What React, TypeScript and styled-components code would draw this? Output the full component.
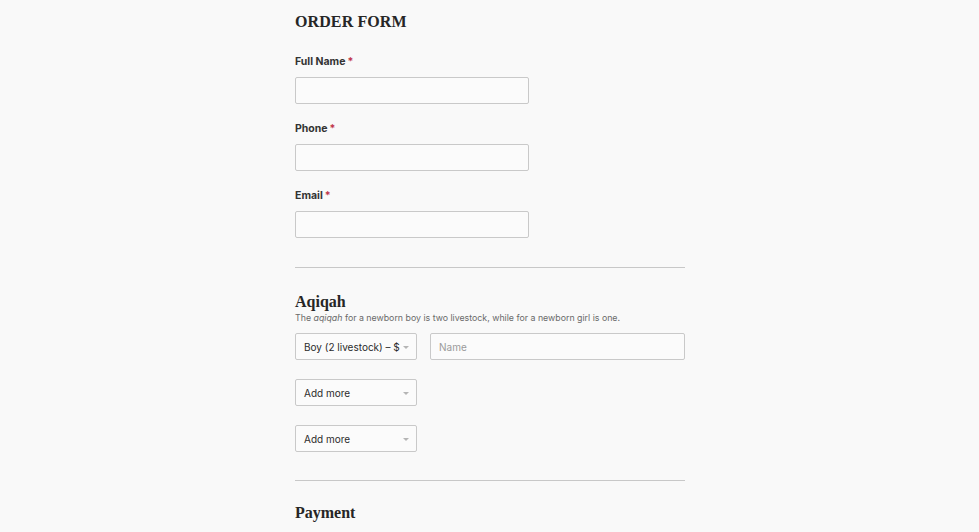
import React from "react";
import styled, { createGlobalStyle } from "styled-components";

const Global = createGlobalStyle`
  html, body { margin: 0; padding: 0; background: #f9f9f9; }
  body { font-family: Inter, "Liberation Sans", sans-serif; color: #2b2b2b; }
  * { box-sizing: border-box; }
`;

const Page = styled.div`
  width: 390px;
  margin-left: 295px;
  padding-top: 12px;
`;

const Title = styled.h1`
  margin: 0 0 22px;
  font-family: "Liberation Serif", "Times New Roman", serif;
  font-size: 16px;
  font-weight: 700;
  letter-spacing: 0.1px;
  line-height: 20px;
  color: #262626;
`;

const Field = styled.div`
  display: flex;
  flex-direction: column;
  margin-bottom: 17px;
`;

const Label = styled.label`
  font-size: 10.5px;
  font-weight: 700;
  line-height: 13px;
  color: #333;
  margin-bottom: 9px;
  padding-top: 1px;
`;

const Req = styled.span`
  color: #c0354a;
  margin-left: 2px;
`;

const TextInput = styled.input<{ $w?: number }>`
  width: ${(p) => (p.$w ? `${p.$w}px` : "100%")};
  height: 27px;
  border: 1px solid #c9c9c9;
  border-radius: 2px;
  background: #fbfbfb;
  padding: 0 8px;
  font-family: Inter, "Liberation Sans", sans-serif;
  font-size: 10px;
  color: #333;
  &::placeholder { color: #9a9a9a; }
`;

const Rule = styled.hr<{ $top?: number; $bottom?: number }>`
  border: none;
  border-top: 1px solid #c8c8c8;
  margin: ${(p) => p.$top ?? 29}px 0 ${(p) => p.$bottom ?? 24}px;
`;

const Section = styled.h2`
  margin: 0;
  font-family: "Liberation Serif", "Times New Roman", serif;
  font-size: 16px;
  font-weight: 700;
  line-height: 20px;
  color: #262626;
`;

const Note = styled.p`
  margin: 0 0 9px;
  font-size: 8.8px;
  line-height: 12px;
  color: #6a6a6a;
`;

const Row = styled.div`
  display: flex;
  gap: 13px;
  margin-bottom: 19px;
`;

const Select = styled.div`
  position: relative;
  width: 122px;
  height: 27px;
  flex: none;
  border: 1px solid #c9c9c9;
  border-radius: 2px;
  background: #fbfbfb;
  display: flex;
  align-items: center;
  padding: 0 8px;
  font-size: 10px;
  color: #2b2b2b;
  white-space: nowrap;
  overflow: hidden;
`;

const Caret = styled.span`
  position: absolute;
  right: 7px;
  top: 12px;
  width: 0;
  height: 0;
  border-left: 3px solid transparent;
  border-right: 3px solid transparent;
  border-top: 3px solid #b5b5b5;
`;

const Stack = styled.div`
  display: flex;
  flex-direction: column;
  gap: 19px;
`;

export default function App() {
  return (
    <>
      <Global />
      <Page>
        <Title>ORDER FORM</Title>
        <Field>
          <Label>Full Name<Req>*</Req></Label>
          <TextInput $w={234} />
        </Field>
        <Field>
          <Label>Phone<Req>*</Req></Label>
          <TextInput $w={234} />
        </Field>
        <Field>
          <Label>Email<Req>*</Req></Label>
          <TextInput $w={234} />
        </Field>
        <Rule />
        <Section>Aqiqah</Section>
        <Note>
          The <i>aqiqah</i> for a newborn boy is two livestock, while for a newborn girl is one.
        </Note>
        <Row>
          <Select>Boy (2 livestock) – $<Caret /></Select>
          <TextInput placeholder="Name" />
        </Row>
        <Stack>
          <Select>Add more<Caret /></Select>
          <Select>Add more<Caret /></Select>
        </Stack>
        <Rule $top={28} $bottom={22} />
        <Section>Payment</Section>
      </Page>
    </>
  );
}
